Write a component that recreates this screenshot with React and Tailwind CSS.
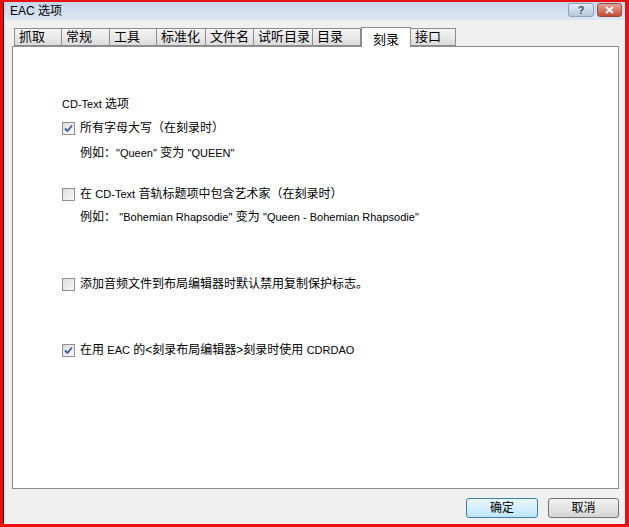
import React from "react";

const tabs = ["抓取", "常规", "工具", "标准化", "文件名", "试听目录", "目录", "刻录", "接口"];
const tabWidths = [48, 48, 47, 49, 48, 59, 48, 50, 45];

const L = ({ children }) => <span className="text-[11px]">{children}</span>;

const Check = ({ checked }) => (
    <span className="w-[13px] h-[13px] border border-[#8f8f8f] bg-gradient-to-br from-[#dcdcdc] to-[#fbfbfb] flex items-center justify-center shrink-0">
        {checked && (
            <svg width="9" height="9" viewBox="0 0 9 9">
                <path d="M1 4.5 L3.5 7 L8 1.5" stroke="#3c5a9a" strokeWidth="1.8" fill="none" />
            </svg>
        )}
    </span>
);

const Option = ({ checked, children }) => (
    <div className="flex items-center gap-[5px] h-[14px]">
        <Check checked={checked} />
        <span>{children}</span>
    </div>
);

export default function App() {
    return (
        <div
            className="w-[629px] h-[527px] border-[#e8100e] border-t-2 border-l-[3px] border-r-4 border-b-[3px] text-[12px] text-black overflow-hidden"
            style={{ fontFamily: '"Liberation Sans", "Noto Sans CJK SC", sans-serif' }}
        >
            <div className="h-full flex flex-col bg-[#f0f0f0] border-l border-[#222]">
                {/* 标题栏 */}
                <div className="h-[18px] flex items-start justify-between bg-gradient-to-b from-[#c6d6ea] to-[#dde7f2] pl-[6px] pr-[3px]">
                    <span className="text-[12px] leading-[16px] pt-[1px]">EAC 选项</span>
                    <div className="flex gap-[3px] pt-[1px]">
                        <div className="w-[26px] h-[14px] rounded-[3px] border border-[#8aa1bc] bg-gradient-to-b from-[#e6eef7] to-[#b5c8dd] flex items-center justify-center text-[11px] leading-none text-[#3a4f6a] font-bold">?</div>
                        <div className="w-[25px] h-[14px] rounded-[3px] border border-[#9b4a3e] bg-gradient-to-b from-[#e6a293] to-[#c44a33] flex items-center justify-center">
                            <svg width="11" height="8" viewBox="0 0 11 8">
                                <path d="M2 1 L9 7 M9 1 L2 7" stroke="white" strokeWidth="2" />
                            </svg>
                        </div>
                    </div>
                </div>

                {/* 选项卡 */}
                <div className="flex items-end pl-[10px] pt-[6px] h-[26px]">
                    {tabs.map((t, i) => {
                        const sel = t === "刻录";
                        return (
                            <div
                                key={t}
                                style={{ width: tabWidths[i] }}
                                className={
                                    sel
                                        ? "h-[20px] -mb-px relative z-10 bg-white border border-b-0 border-[#8c8c8c] flex items-start pt-[2px] justify-center text-[13px]"
                                        : "h-[18px] bg-gradient-to-b from-[#f5f5f5] to-[#dcdcdc] border border-[#8c8c8c] border-l-0 first:border-l flex items-center pl-[4px] text-[13px]"
                                }
                            >
                                {t}
                            </div>
                        );
                    })}
                </div>

                {/* 面板 */}
                <div className="ml-[8px] mr-[6px] h-[443px] bg-white border border-[#8c8c8c] pl-[49px] pt-[50px]">
                    <div className="leading-[14px]"><L>CD-Text</L> 选项</div>
                    <div className="mt-[10px]">
                        <Option checked>所有字母大写（在刻录时）</Option>
                    </div>
                    <div className="ml-[18px] mt-[11px] leading-[14px]">
                        例如：<L>"Queen"</L> 变为 <L>"QUEEN"</L>
                    </div>
                    <div className="mt-[27px]">
                        <Option>在 <L>CD-Text</L> 音轨标题项中包含艺术家（在刻录时）</Option>
                    </div>
                    <div className="ml-[18px] mt-[9px] leading-[14px]">
                        例如： <L>"Bohemian Rhapsodie"</L> 变为 <L>"Queen - Bohemian Rhapsodie"</L>
                    </div>
                    <div className="mt-[53px]">
                        <Option>添加音频文件到布局编辑器时默认禁用复制保护标志。</Option>
                    </div>
                    <div className="mt-[52px]">
                        <Option checked>在用 <L>EAC</L> 的&lt;刻录布局编辑器&gt;刻录时使用 <L>CDRDAO</L></Option>
                    </div>
                </div>

                {/* 按钮 */}
                <div className="flex justify-end gap-[10px] pr-[6px] pt-[9px]">
                    <button className="w-[72px] h-[20px] rounded-[3px] border border-[#3c7fb1] bg-gradient-to-b from-[#eaf6fd] to-[#bee6fd] text-[12px] leading-none">确定</button>
                    <button className="w-[71px] h-[20px] rounded-[3px] border border-[#707070] bg-gradient-to-b from-[#f2f2f2] to-[#d5d5d5] text-[12px] leading-none">取消</button>
                </div>
            </div>
        </div>
    );
}
